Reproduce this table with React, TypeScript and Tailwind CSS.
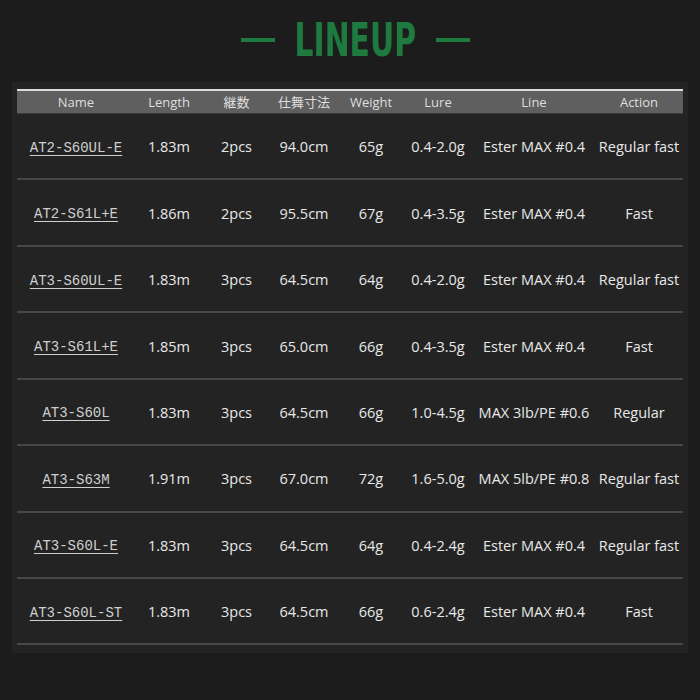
import React from "react";

const rows = [
  ["AT2-S60UL-E", "1.83m", "2pcs", "94.0cm", "65g", "0.4-2.0g", "Ester MAX #0.4", "Regular fast"],
  ["AT2-S61L+E", "1.86m", "2pcs", "95.5cm", "67g", "0.4-3.5g", "Ester MAX #0.4", "Fast"],
  ["AT3-S60UL-E", "1.83m", "3pcs", "64.5cm", "64g", "0.4-2.0g", "Ester MAX #0.4", "Regular fast"],
  ["AT3-S61L+E", "1.85m", "3pcs", "65.0cm", "66g", "0.4-3.5g", "Ester MAX #0.4", "Fast"],
  ["AT3-S60L", "1.83m", "3pcs", "64.5cm", "66g", "1.0-4.5g", "MAX 3lb/PE #0.6", "Regular"],
  ["AT3-S63M", "1.91m", "3pcs", "67.0cm", "72g", "1.6-5.0g", "MAX 5lb/PE #0.8", "Regular fast"],
  ["AT3-S60L-E", "1.83m", "3pcs", "64.5cm", "64g", "0.4-2.4g", "Ester MAX #0.4", "Regular fast"],
  ["AT3-S60L-ST", "1.83m", "3pcs", "64.5cm", "66g", "0.6-2.4g", "Ester MAX #0.4", "Fast"],
];

const headers = ["Name", "Length", "継数", "仕舞寸法", "Weight", "Lure", "Line", "Action"];
const widths = ["w-[118px]", "w-[68px]", "w-[67px]", "w-[68px]", "w-[66px]", "w-[68px]", "w-[124px]", "w-[86px]"];

export default function App() {
  return (
    <div className="w-[700px] h-[700px] bg-[#1c1c1c] overflow-hidden flex flex-col" style={{ fontFamily: '"Open Sans", "Noto Sans CJK JP", sans-serif' }}>
      <div className="h-[82px] w-full flex items-center justify-center gap-[22px] pl-[10px] pb-[3px]">
        <div className="w-[34px] h-[4px] bg-[#1e7a3e]" />
        <div className="w-[117px] flex justify-center">
          <span
            className="text-[#1e7a3e] text-[46px] leading-none font-bold whitespace-nowrap inline-block"
            style={{ fontFamily: '"DejaVu Sans Condensed", "DejaVu Sans", sans-serif', fontStretch: "condensed", transform: "scaleX(0.72)" }}
          >
            LINEUP
          </span>
        </div>
        <div className="w-[34px] h-[4px] bg-[#1e7a3e]" />
      </div>
      <div className="w-[676px] bg-[#232323] pt-[7px] pb-[8px] px-[5px] ml-[12px]">
        <div className="w-[666px]">
          <div className="flex h-[25px] bg-[#5f5f5f] border-t-2 border-[#dcdcdc] border-b border-b-[#3a3a3a] items-center text-[13px] text-[#dedede]">
            {headers.map((h, i) => (
              <div key={i} className={`${widths[i]} text-center leading-none`}>{h}</div>
            ))}
          </div>
          {rows.map((r, ri) => (
            <div key={ri} className="flex h-[66.43px] items-center border-b-2 border-[#484848] text-[14.5px] text-[#e8e8e8] pt-[2px]">
              {r.map((c, ci) => (
                <div key={ci} className={`${widths[ci]} text-center whitespace-nowrap`}>
                  {ci === 0 ? (
                    <span className="underline underline-offset-[3px] text-[#cfcfcf] text-[14px]" style={{ fontFamily: '"Liberation Mono", monospace' }}>{c}</span>
                  ) : (
                    c
                  )}
                </div>
              ))}
            </div>
          ))}
        </div>
      </div>
    </div>
  );
}
